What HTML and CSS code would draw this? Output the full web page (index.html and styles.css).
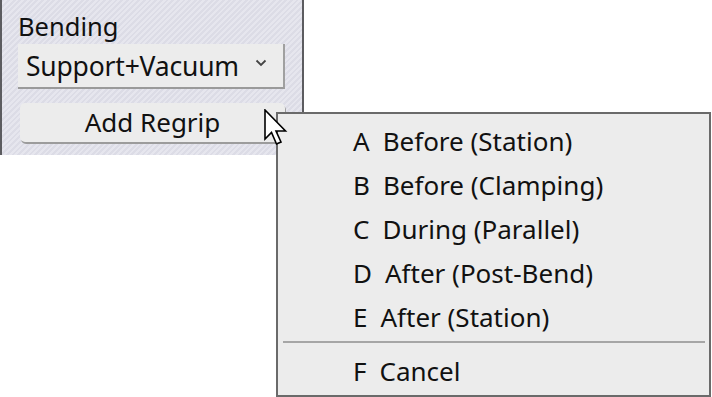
FILE: index.html
```html
<!DOCTYPE html>
<html lang="en">
<head>
    <meta charset="UTF-8">
    <title>Add Regrip</title>
    <link rel="stylesheet" href="styles.css">
</head>
<body>
    <div class="panel">
        <div class="label">Bending</div>
        <div class="select">
            <span>Support+Vacuum</span>
            <svg class="chevron" width="12" height="8" viewBox="0 0 12 8">
                <path d="M1.5 1.5 L6 6 L10.5 1.5" fill="none" stroke="#444" stroke-width="1.8"/>
            </svg>
        </div>
        <div class="button">Add Regrip</div>
    </div>

    <div class="menu">
        <div class="item"><span class="key">A</span>Before (Station)</div>
        <div class="item"><span class="key">B</span>Before (Clamping)</div>
        <div class="item"><span class="key">C</span>During (Parallel)</div>
        <div class="item"><span class="key">D</span>After (Post-Bend)</div>
        <div class="item"><span class="key">E</span>After (Station)</div>
        <div class="separator"></div>
        <div class="item"><span class="key">F</span>Cancel</div>
    </div>

    <svg class="cursor" width="26" height="40" viewBox="0 0 26 40">
        <path d="M1 1 L1 30 L7.5 23.5 L12.5 35 L17 33 L12 22 L21.5 22 Z" fill="#fff" stroke="#000" stroke-width="1.6" stroke-linejoin="miter"/>
    </svg>
</body>
</html>
```

FILE: styles.css
```css
body {
    margin: 0;
    background-color: #fff;
    font-family: "Noto Sans", "Open Sans", sans-serif;
    color: #111;
    width: 712px;
    height: 397px;
    position: relative;
    overflow: hidden;
}
.panel {
    width: 304px;
    height: 155px;
    box-sizing: border-box;
    border-left: 2px solid #5c5c60;
    border-right: 2px solid #5c5c60;
    padding: 10px 17px 0 16px;
    background: repeating-linear-gradient(135deg, #dcdce6 0px, #dcdce6 2px, #e6e6ee 2px, #e6e6ee 4px);
}
.label {
    font-size: 25.5px;
    line-height: 32px;
    height: 34px;
}
.select {
    display: flex;
    align-items: center;
    justify-content: space-between;
    height: 43px;
    margin-bottom: 14px;
    padding: 0 16px 0 8px;
    background-color: #ececec;
    border-right: 2px solid #a0a0a0;
    border-bottom: 2px solid #9a9a9a;
    font-size: 26.5px;
    letter-spacing: -0.2px;
}
.chevron {
    margin-top: -6px;
}
.button {
    margin-left: 2px;
    height: 39px;
    line-height: 38px;
    text-align: center;
    background-color: #ececec;
    border-radius: 5px;
    box-shadow: 1px 2px 0 #9c9c9c;
    font-size: 26px;
}
.menu {
    position: absolute;
    left: 276px;
    top: 112px;
    width: 435px;
    height: 285px;
    box-sizing: border-box;
    border: 2px solid #6a6a6a;
    background-color: #ececec;
    padding-top: 5px;
}
.item {
    height: 44px;
    line-height: 44px;
    padding-left: 75px;
    font-size: 26px;
}
.key {
    display: inline-block;
    margin-right: 13px;
}
.separator {
    height: 2px;
    margin: 2px 4px 6px 5px;
    background-color: #a6a6a6;
}
.cursor {
    position: absolute;
    left: 264px;
    top: 109px;
}
```
